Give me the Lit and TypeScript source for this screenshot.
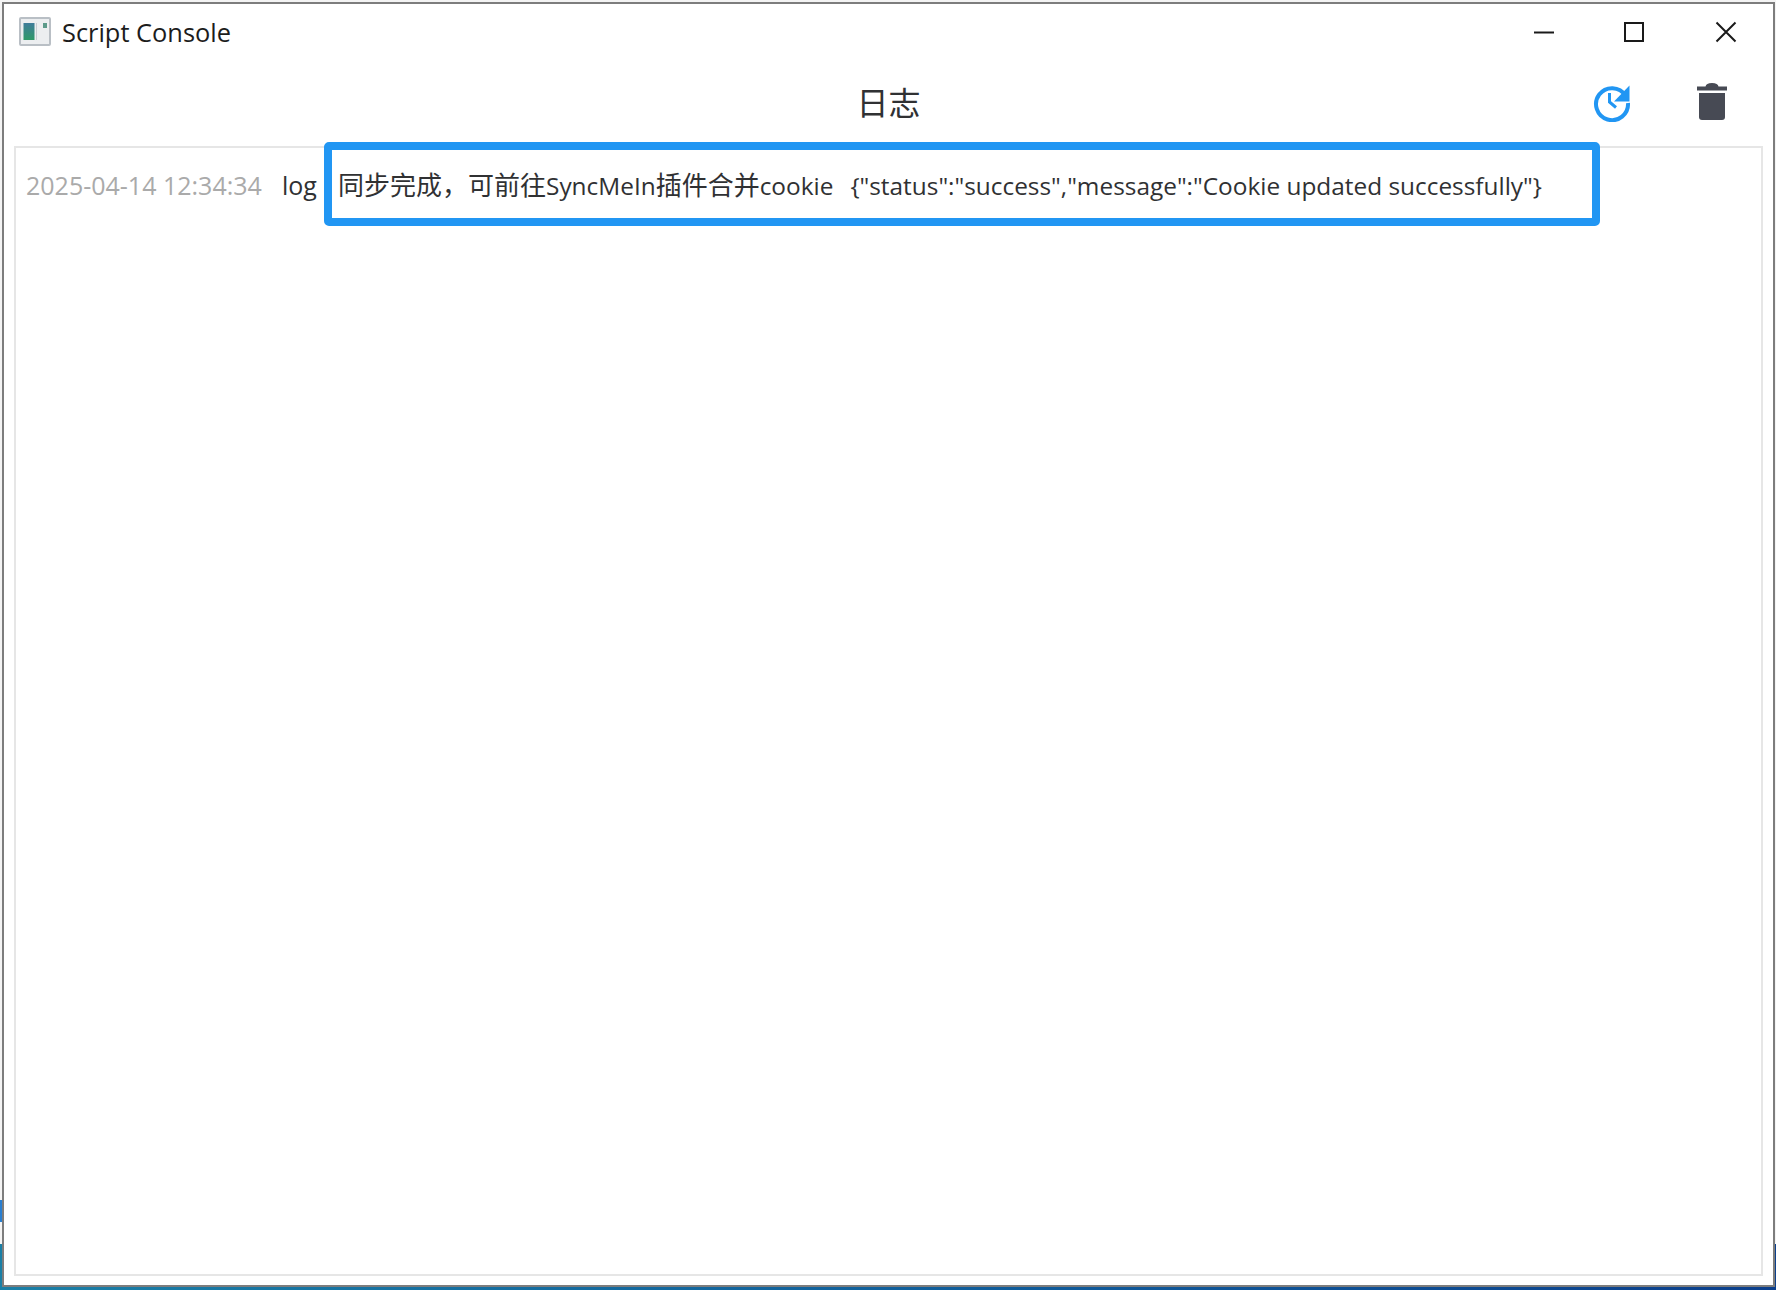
import { LitElement, html, css } from "lit";
import { customElement } from "lit/decorators.js";

@customElement("app-root")
export class AppRoot extends LitElement {
  static styles = css`
    :host {
      display: block;
      width: 1776px;
      height: 1290px;
      font-family: "Open Sans", "Noto Sans CJK SC", sans-serif;
    }
    .desktop {
      box-sizing: border-box;
      width: 1776px;
      height: 1290px;
      padding: 2px 1px 3px 2px;
      background:
        linear-gradient(#2a7fd0, #2a7fd0) 0 1200px / 2px 22px no-repeat,
        linear-gradient(90deg, #1a7fa6 0%, #0f5a9a 60%, #0c3f8c 100%) 0 1244px / 100% 46px no-repeat,
        #f4f4f4;
      display: flex;
    }
    .window {
      flex: 1;
      box-sizing: border-box;
      border: 2px solid rgba(70, 70, 70, 0.7);
      background: #fff;
      display: flex;
      flex-direction: column;
      padding: 0 10px 9px 10px;
    }
    .titlebar {
      height: 56px;
      margin: 0 -10px;
      display: flex;
      align-items: center;
      padding: 0 0 0 15px;
      flex: none;
    }
    .app-icon {
      width: 32px;
      height: 30px;
      flex: none;
      margin-right: 11px;
    }
    .app-title {
      font-size: 25.4px;
      color: #1c1c1c;
      flex: 1;
    }
    .controls {
      display: flex;
      flex: none;
      padding-right: 35px;
      gap: 68px;
    }
    .controls svg {
      width: 24px;
      height: 24px;
      display: block;
    }
    .controls .min {
      margin-right: -2px;
    }
    .toolbar {
      height: 86px;
      flex: none;
      display: grid;
      grid-template-columns: 1fr auto 1fr;
      align-items: center;
      padding-bottom: 5px;
      box-sizing: border-box;
    }
    .heading {
      margin: 0;
      font-size: 32px;
      color: #303133;
      font-weight: 400;
      font-family: "Noto Sans CJK SC", sans-serif;
    }
    .tools {
      justify-self: end;
      padding-right: 30px;
      display: flex;
      gap: 58px;
      align-items: center;
    }
    .tools svg {
      display: block;
      width: 42px;
      height: 42px;
    }
    .panel {
      flex: 1;
      border: 2px solid #e6e6e6;
      box-sizing: border-box;
      padding: 18px 10px;
      position: relative;
    }
    .row {
      display: flex;
      align-items: baseline;
      height: 36px;
      line-height: 36px;
      font-size: 25px;
      white-space: nowrap;
      color: #303133;
    }
    .time {
      color: #aaa;
      width: 256px;
      flex: none;
    }
    .level {
      width: 56px;
      flex: none;
    }
    .msg {
      font-size: 24.4px;
    }
    .cjk {
      font-family: "Noto Sans CJK SC", sans-serif;
      font-size: 26px;
    }
    .gap {
      display: inline-block;
      width: 17px;
    }
    .highlight {
      position: absolute;
      left: 308px;
      top: -6px;
      width: 1276px;
      height: 84px;
      box-sizing: border-box;
      border: 8px solid #2196f3;
      border-radius: 5px;
    }
  `;

  render() {
    return html`
      <div class="desktop">
        <div class="window">
          <div class="titlebar">
            <svg class="app-icon" viewBox="0 0 32 30">
              <rect x="1" y="1" width="30" height="27" rx="1" fill="#eceef0" stroke="#b9bfc5" stroke-width="2"/>
              <defs>
                <linearGradient id="g" x1="0" y1="0" x2="0" y2="1">
                  <stop offset="0" stop-color="#3f7c9a"/>
                  <stop offset="1" stop-color="#2f9a68"/>
                </linearGradient>
              </defs>
              <rect x="4.5" y="6" width="11" height="17" fill="url(#g)"/>
              <rect x="17" y="6" width="1" height="17" fill="#c8cdd2"/>
              <rect x="24" y="6" width="4" height="5" fill="#5c9a8a"/>
            </svg>
            <span class="app-title">Script Console</span>
            <div class="controls">
              <svg class="min" viewBox="0 0 24 24"><path d="M2 12.5H22" stroke="#1a1a1a" stroke-width="2" fill="none"/></svg>
              <svg viewBox="0 0 24 24"><rect x="3" y="3" width="18" height="18" stroke="#1a1a1a" stroke-width="2" fill="none"/></svg>
              <svg viewBox="0 0 24 24"><path d="M2.5 2.5L21.5 21.5M21.5 2.5L2.5 21.5" stroke="#1a1a1a" stroke-width="2" fill="none"/></svg>
            </div>
          </div>
          <div class="toolbar">
            <span></span>
            <h1 class="heading">日志</h1>
            <div class="tools">
              <svg viewBox="0 0 42 42">
                <path d="M34.5 15.5A16 16 0 1 0 37 23" fill="none" stroke="#2196f3" stroke-width="4"/>
                <path d="M38.5 5.5V21.5H23Z" fill="#2196f3"/>
                <path d="M18.5 13V22L25 27.5" fill="none" stroke="#2196f3" stroke-width="3"/>
              </svg>
              <svg viewBox="0 0 42 42">
                <path d="M6 6.5H14.5Q15 3 21 3Q27 3 27.5 6.5H36V10.5H6Z" fill="#474a54"/>
                <path d="M8 13H34V37A3 3 0 0 1 31 40H11A3 3 0 0 1 8 37Z" fill="#474a54"/>
              </svg>
            </div>
          </div>
          <div class="panel">
            <div class="row">
              <span class="time">2025-04-14 12:34:34</span>
              <span class="level">log</span>
              <span class="msg"><span class="cjk">同步完成，可前往</span>SyncMeIn<span class="cjk">插件合并</span>cookie<span class="gap"></span>{"status":"success","message":"Cookie updated successfully"}</span>
            </div>
            <div class="highlight"></div>
          </div>
        </div>
      </div>
    `;
  }
}
